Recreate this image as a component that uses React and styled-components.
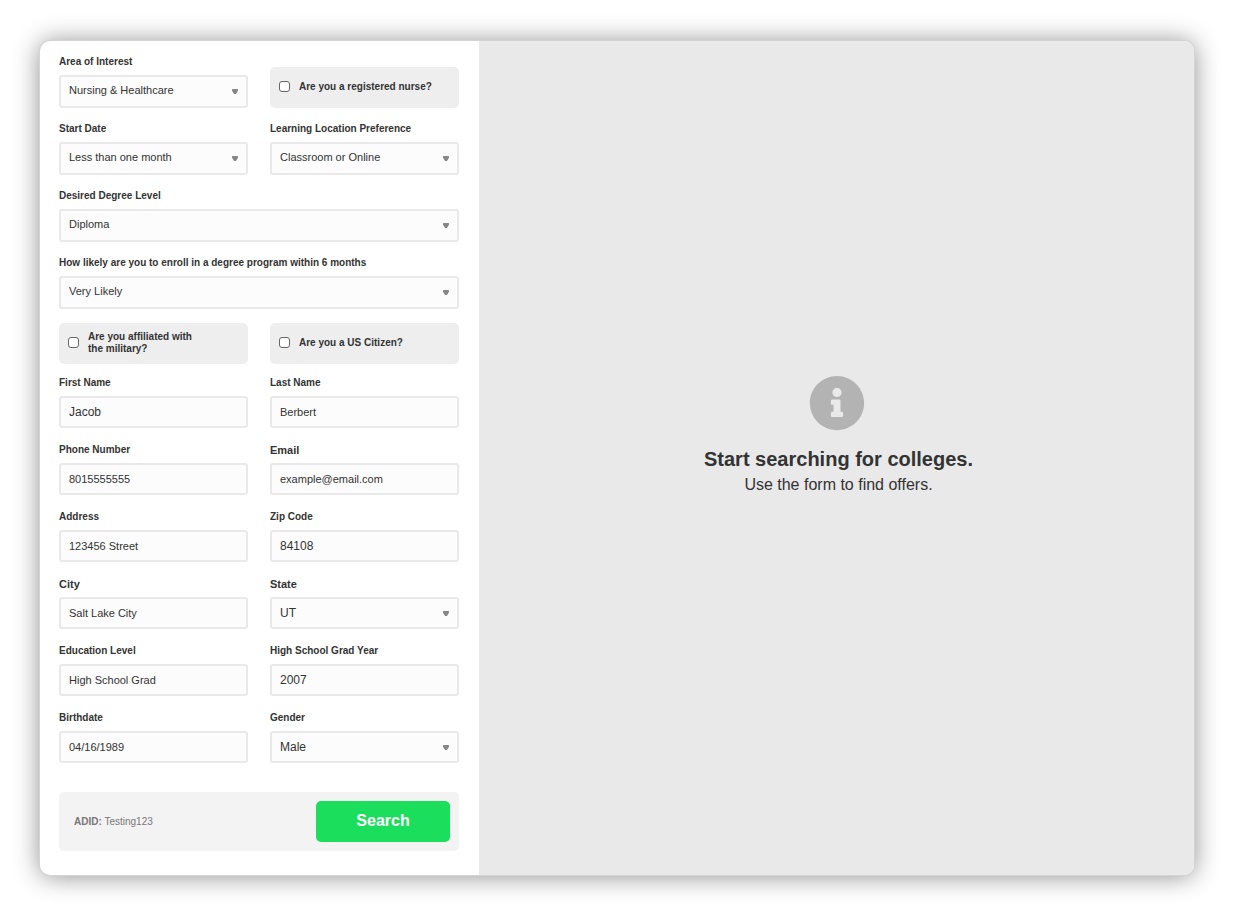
import React, { useId } from "react";
import styled, { createGlobalStyle, css } from "styled-components";
import { FaInfoCircle } from "react-icons/fa";

const GlobalStyle = createGlobalStyle`
  *, *::before, *::after { box-sizing: border-box; }
  body {
    margin: 0;
    background: #fff;
    color: #333;
    font-family: "Liberation Sans", Arial, Helvetica, sans-serif;
  }
`;

const Page = styled.main`
  padding: 41px 40px;
`;

const Card = styled.div`
  display: flex;
  background: #fff;
  border-radius: 10px;
  overflow: hidden;
  box-shadow: 0 0 0 1px #d4d4d4, 0 1px 26px rgba(0, 0, 0, 0.46);
`;

const FormPanel = styled.form`
  flex: 0 0 439px;
  padding: 14px 20px 24px 19px;
`;

const FieldGrid = styled.div`
  display: grid;
  grid-template-columns: 1fr 1fr;
  gap: ${(p) => (p.$tall ? 14 : 15)}px 22px;
  --box-height: ${(p) => (p.$tall ? 33 : 32)}px;
  --box-lift: ${(p) => (p.$tall ? 3 : 0)}px;

  & + & {
    margin-top: 12px;
  }
`;

const FieldBlock = styled.div`
  display: flex;
  flex-direction: column;
  gap: 6px;
  grid-column: ${(p) => (p.$wide ? "1 / -1" : "auto")};
`;

const Label = styled.label`
  font-size: ${(p) => (p.$large ? 11 : 10)}px;
  line-height: 14px;
  font-weight: 700;
`;

const box = css`
  width: 100%;
  height: var(--box-height);
  margin: 0;
  padding: 0 8px var(--box-lift);
  border: 2px solid #e9e9e9;
  border-radius: 3px;
  background: #fcfcfc;
  color: #333;
  font-family: inherit;
  font-size: ${(p) => (p.$large ? 12 : 11)}px;
`;

const TextInput = styled.input`
  ${box}
`;

const SelectShell = styled.div`
  position: relative;
`;

const SelectInput = styled.select`
  ${box}
  appearance: none;
`;

const Arrow = styled.svg`
  position: absolute;
  top: 0;
  bottom: 0;
  right: 10px;
  margin: auto 0;
  width: 6px;
  height: 5px;
  fill: #868686;
  pointer-events: none;
`;

const CheckCard = styled.label`
  display: flex;
  align-items: center;
  align-self: end;
  gap: 9px;
  height: 41px;
  padding: 0 9px 2px;
  border-radius: 5px;
  background: #eee;
  font-size: 10px;
  line-height: 12px;
  font-weight: 700;
`;

const Checkbox = styled.input`
  appearance: none;
  flex: none;
  width: 11px;
  height: 11px;
  margin: 0;
  border: 1px solid #666;
  border-radius: 3px;
  background: #fff;

  &:checked {
    background: #19df5c;
  }
`;

const CheckText = styled.span`
  max-width: 134px;
`;

const FormFooter = styled.div`
  display: flex;
  align-items: center;
  justify-content: space-between;
  margin-top: 29px;
  padding: 9px 9px 9px 15px;
  border-radius: 5px;
  background: #f3f3f3;
`;

const AdId = styled.p`
  margin: 0;
  font-size: 10px;
  color: #777;
`;

const SearchButton = styled.button`
  width: 134px;
  height: 41px;
  padding: 0 0 2px;
  border: 0;
  border-radius: 5px;
  background: #1bde5c;
  color: #fff;
  font-family: inherit;
  font-size: 16px;
  font-weight: 700;
`;

const ResultsPanel = styled.section`
  flex: 1;
  display: flex;
  flex-direction: column;
  align-items: center;
  justify-content: center;
  gap: 15px;
  padding-bottom: 44px;
  background: #e9e9e9;
`;

const InfoIcon = styled(FaInfoCircle)`
  width: 56px;
  height: 56px;
  color: #b3b3b3;
`;

const Message = styled.div`
  padding-left: 4px;
  text-align: center;
`;

const Heading = styled.h1`
  margin: 0;
  font-size: 20px;
  line-height: 26px;
`;

const SubText = styled.p`
  margin: 0;
  font-size: 16px;
  line-height: 25px;
`;

function Field({ label, value, wide, largeLabel, large, select }) {
  const id = useId();
  return (
    <FieldBlock $wide={wide}>
      <Label htmlFor={id} $large={largeLabel}>{label}</Label>
      {select ? (
        <SelectShell>
          <SelectInput id={id} $large={large} defaultValue={value}>
            <option>{value}</option>
          </SelectInput>
          <Arrow viewBox="0 0 6 5" aria-hidden="true">
            <path d="M.6 0h4.800q.6 0 .6.600v.9q0 .4-.3.7L4.300 4.400q-.5.600-1.300.6t-1.300-.6L.3 2.200Q0 1.900 0 1.500V.6Q0 0 .6 0z" />
          </Arrow>
        </SelectShell>
      ) : (
        <TextInput id={id} $large={large} type="text" defaultValue={value} />
      )}
    </FieldBlock>
  );
}

function Check({ children }) {
  return (
    <CheckCard>
      <Checkbox type="checkbox" />
      <CheckText>{children}</CheckText>
    </CheckCard>
  );
}

export default function App() {
  return (
    <Page>
      <GlobalStyle />
      <Card>
        <FormPanel onSubmit={(e) => e.preventDefault()}>
          <FieldGrid $tall>
            <Field select label="Area of Interest" value="Nursing & Healthcare" />
            <Check>Are you a registered nurse?</Check>
            <Field select label="Start Date" value="Less than one month" />
            <Field select label="Learning Location Preference" value="Classroom or Online" />
            <Field select wide label="Desired Degree Level" value="Diploma" />
            <Field
              select
              wide
              label="How likely are you to enroll in a degree program within 6 months"
              value="Very Likely"
            />
            <Check>Are you affiliated with<br />the military?</Check>
            <Check>Are you a US Citizen?</Check>
          </FieldGrid>
          <FieldGrid>
            <Field large label="First Name" value="Jacob" />
            <Field label="Last Name" value="Berbert" />
            <Field label="Phone Number" value="8015555555" />
            <Field largeLabel label="Email" value="example@email.com" />
            <Field label="Address" value="123456 Street" />
            <Field large label="Zip Code" value="84108" />
            <Field largeLabel label="City" value="Salt Lake City" />
            <Field select large largeLabel label="State" value="UT" />
            <Field label="Education Level" value="High School Grad" />
            <Field large label="High School Grad Year" value="2007" />
            <Field label="Birthdate" value="04/16/1989" />
            <Field select large label="Gender" value="Male" />
          </FieldGrid>
          <FormFooter>
            <AdId><b>ADID:</b> Testing123</AdId>
            <SearchButton type="submit">Search</SearchButton>
          </FormFooter>
        </FormPanel>
        <ResultsPanel>
          <InfoIcon aria-hidden="true" />
          <Message>
            <Heading>Start searching for colleges.</Heading>
            <SubText>Use the form to find offers.</SubText>
          </Message>
        </ResultsPanel>
      </Card>
    </Page>
  );
}
